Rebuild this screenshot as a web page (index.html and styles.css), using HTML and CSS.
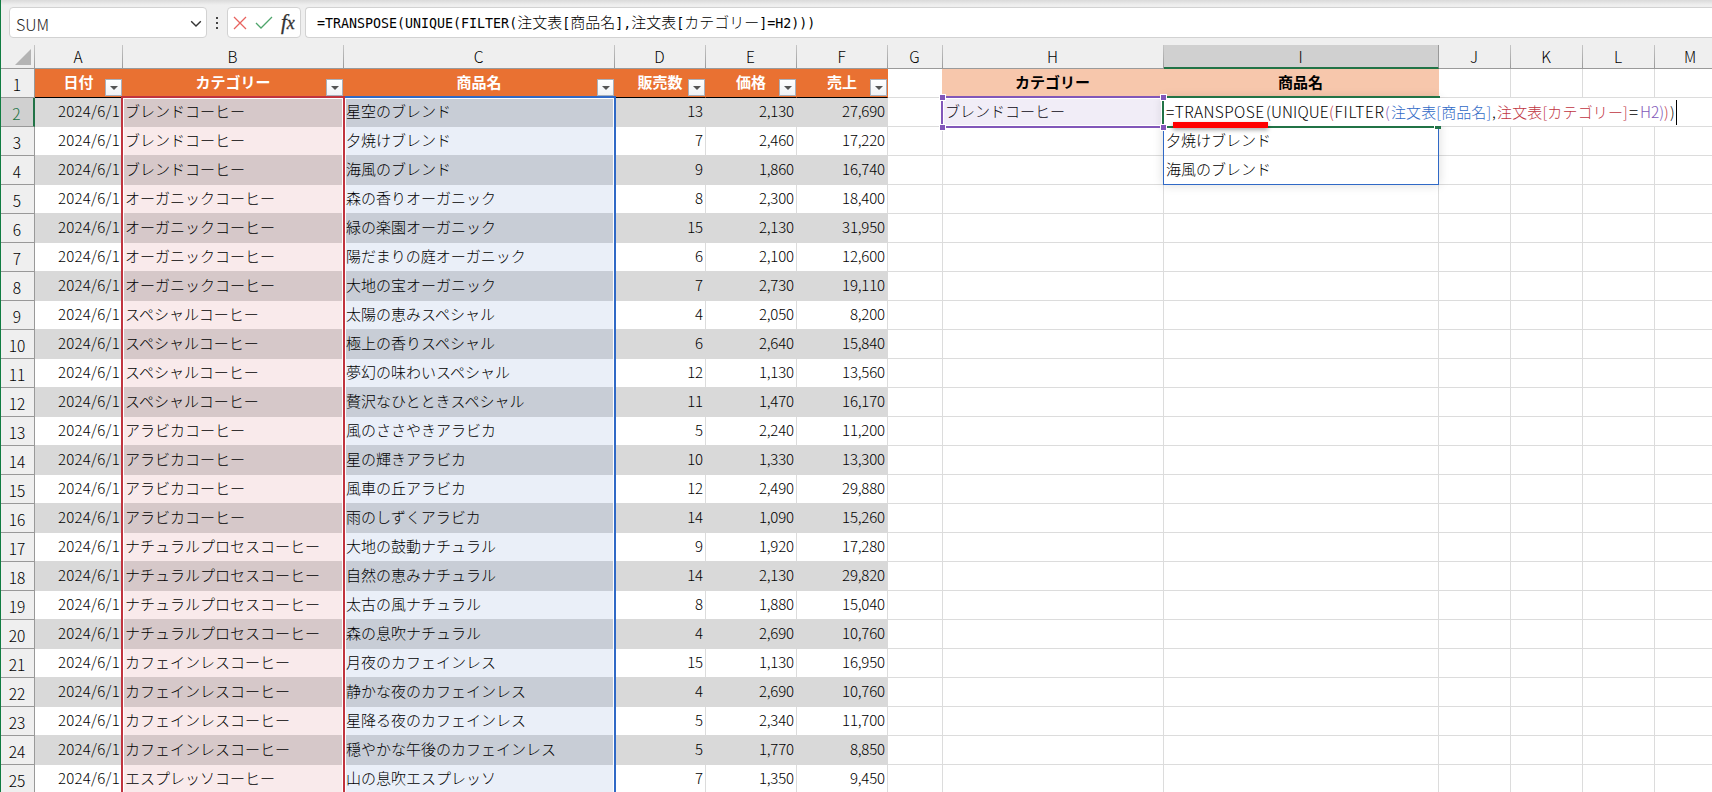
FILE: index.html
```html
<!DOCTYPE html>
<html lang="ja">
<head>
    <meta charset="UTF-8">
    <meta name="viewport" content="width=device-width, initial-scale=1.0">
    <title>注文表</title>
    <link rel="stylesheet" href="styles.css">
</head>
<body>
    <div class="app">
        <div class="formula-bar">
            <div class="name-box">
                <span>SUM</span>
                <svg width="12" height="8" viewBox="0 0 12 8"><path d="M1.2 1.2L6 6l4.8-4.8" fill="none" stroke="#333" stroke-width="1.4"/></svg>
            </div>
            <svg class="dots" width="4" height="14" viewBox="0 0 4 14"><path d="M1 1h2v2H1zM1 6h2v2H1zM1 11h2v2H1z" fill="#444"/></svg>
            <div class="actions">
                <svg width="14" height="14" viewBox="0 0 14 14"><path d="M1 1l12 12M13 1L1 13" fill="none" stroke="#e8635f" stroke-width="1.3"/></svg>
                <svg width="18" height="14" viewBox="0 0 18 14"><path d="M1 7l5 5L17 1" fill="none" stroke="#4ea56b" stroke-width="1.3"/></svg>
                <span class="fx"><i>f</i><i class="x">x</i></span>
            </div>
            <div class="formula-input">=TRANSPOSE(UNIQUE(FILTER(<b>注文表</b>[<b>商品名</b>],<b>注文表</b>[<b>カテゴリー</b>]=H2)))</div>
        </div>

        <div class="sheet">
            <table>
                <colgroup>
                    <col class="w-head"><col class="w-a"><col class="w-b"><col class="w-c">
                    <col class="w-d"><col class="w-d"><col class="w-d"><col class="w-g">
                    <col class="w-b"><col class="w-i"><col class="w-j"><col class="w-j"><col class="w-j"><col class="w-j">
                </colgroup>
                <thead>
                    <tr>
                        <th class="corner"><svg width="16" height="16" viewBox="0 0 16 16"><path d="M16 0v16H0z" fill="#b4b4b4"/></svg></th>
                        <th>A</th><th>B</th><th>C</th><th>D</th><th>E</th><th>F</th><th>G</th>
                        <th>H</th><th class="active">I</th><th>J</th><th>K</th><th>L</th><th>M</th>
                    </tr>
                </thead>
                <tbody id="rows"></tbody>
            </table>

            <div class="range range-b"></div>
            <div class="range range-c"></div>
            <div class="spill"></div>
            <div class="editor">
                <span class="fn1">=TRANSPOSE</span>
                <span class="fn2">(UNIQUE</span>
                <span class="fn3"><em class="red">(</em>FILTER</span>
                <span class="paren purple">(</span>
                <span class="ref1 blue">注文表[商品名]</span>
                <span class="comma">,</span>
                <span class="ref2 red">注文表[カテゴリー]</span>
                <span class="eq">=</span>
                <span class="ref3 purple">H2)</span>
                <span class="paren red">)</span>
                <span class="paren">)</span>
                <span class="caret"></span>
            </div>
            <div class="cell-frame"></div>
            <div class="range-h"><i></i><i></i><i></i><i></i></div>
            <div class="underline"></div>
        </div>
    </div>

    <script>
        const headers = ["日付", "カテゴリー", "商品名", "販売数", "価格", "売上"];
        const orders = [
            ["ブレンドコーヒー", "星空のブレンド", 13, 2130],
            ["ブレンドコーヒー", "夕焼けブレンド", 7, 2460],
            ["ブレンドコーヒー", "海風のブレンド", 9, 1860],
            ["オーガニックコーヒー", "森の香りオーガニック", 8, 2300],
            ["オーガニックコーヒー", "緑の楽園オーガニック", 15, 2130],
            ["オーガニックコーヒー", "陽だまりの庭オーガニック", 6, 2100],
            ["オーガニックコーヒー", "大地の宝オーガニック", 7, 2730],
            ["スペシャルコーヒー", "太陽の恵みスペシャル", 4, 2050],
            ["スペシャルコーヒー", "極上の香りスペシャル", 6, 2640],
            ["スペシャルコーヒー", "夢幻の味わいスペシャル", 12, 1130],
            ["スペシャルコーヒー", "贅沢なひとときスペシャル", 11, 1470],
            ["アラビカコーヒー", "風のささやきアラビカ", 5, 2240],
            ["アラビカコーヒー", "星の輝きアラビカ", 10, 1330],
            ["アラビカコーヒー", "風車の丘アラビカ", 12, 2490],
            ["アラビカコーヒー", "雨のしずくアラビカ", 14, 1090],
            ["ナチュラルプロセスコーヒー", "大地の鼓動ナチュラル", 9, 1920],
            ["ナチュラルプロセスコーヒー", "自然の恵みナチュラル", 14, 2130],
            ["ナチュラルプロセスコーヒー", "太古の風ナチュラル", 8, 1880],
            ["ナチュラルプロセスコーヒー", "森の息吹ナチュラル", 4, 2690],
            ["カフェインレスコーヒー", "月夜のカフェインレス", 15, 1130],
            ["カフェインレスコーヒー", "静かな夜のカフェインレス", 4, 2690],
            ["カフェインレスコーヒー", "星降る夜のカフェインレス", 5, 2340],
            ["カフェインレスコーヒー", "穏やかな午後のカフェインレス", 5, 1770],
            ["エスプレッソコーヒー", "山の息吹エスプレッソ", 7, 1350]
        ];
        const side = {
            2: ["ブレンドコーヒー", ""],
            3: ["", "夕焼けブレンド"],
            4: ["", "海風のブレンド"]
        };
        const filter = '<span class="filter"><svg width="8" height="4" viewBox="0 0 8 4"><path d="M0 0h8L4 4z" fill="#555"/></svg></span>';
        const empty = "<td></td>";

        let html = '<tr class="titles"><th>1</th>';
        headers.forEach(h => html += `<td class="title"><span>${h}</span>${filter}</td>`);
        html += '<td class="gap"></td><td class="title2">カテゴリー</td><td class="title2">商品名</td>' + empty.repeat(4) + "</tr>";

        orders.forEach((o, i) => {
            const n = i + 2;
            const s = side[n] || ["", ""];
            html += `<tr class="${i % 2 ? "plain" : "band"}"><th class="${n === 2 ? "active" : ""}">${n}</th>
                <td class="t num date">2024/6/1</td>
                <td class="t cat">${o[0]}</td>
                <td class="t item">${o[1]}</td>
                <td class="t num">${o[2]}</td>
                <td class="t num">${o[3].toLocaleString("en-US")}</td>
                <td class="t num">${(o[2] * o[3]).toLocaleString("en-US")}</td>
                ${empty}<td>${s[0]}</td><td>${s[1]}</td>${empty.repeat(4)}</tr>`;
        });
        document.getElementById("rows").innerHTML = html;
    </script>
</body>
</html>
```

FILE: styles.css
```css
* {
    box-sizing: border-box;
}

body {
    margin: 0;
    background: #fff;
    color: #000;
    font-family: "Noto Sans CJK JP", sans-serif;
    font-size: 15px;
    font-weight: 300;
    overflow: hidden;
}

.app {
    width: 1712px;
    height: 792px;
    overflow: hidden;
    border-left: 1px solid #107c41;
}

/* formula bar */
.formula-bar {
    display: flex;
    align-items: flex-start;
    height: 45px;
    padding: 7px 0 0 8px;
    background: linear-gradient(#dadada 0, #efefef 5px);
}

.name-box, .actions, .formula-input {
    height: 31px;
    background: #fff;
    border: 1px solid #d2d2d2;
    border-radius: 4px;
}

.name-box {
    display: flex;
    align-items: center;
    justify-content: space-between;
    width: 198px;
    padding: 3px 4px 0 6px;
    font-size: 16px;
    color: #222;
}

.dots {
    margin: 9px 8px 0 8px;
}

.actions {
    display: flex;
    align-items: center;
    width: 74px;
    padding-left: 5px;
}

.actions svg + svg {
    margin-left: 8px;
}

.fx {
    margin-left: 8px;
    font: 21px/24px "Liberation Serif", serif;
    color: #333;
    -webkit-text-stroke: 0.3px #333;
}

.fx .x {
    font-size: 18px;
}

.formula-input {
    flex: 1;
    margin-left: 4px;
    padding-left: 11px;
    border-right: 0;
    border-radius: 4px 0 0 4px;
    font: 13.3px/27px "DejaVu Sans Mono", monospace;
    white-space: nowrap;
}

.formula-input b {
    font: 300 15px/27px "Noto Sans CJK JP", sans-serif;
}

/* grid */
.sheet {
    position: relative;
}

table {
    width: 1726px;
    table-layout: fixed;
    border-collapse: separate;
    border-spacing: 0;
}

.w-head { width: 34px; }
.w-a { width: 88px; }
.w-b { width: 221px; }
.w-c { width: 271px; }
.w-d { width: 91px; }
.w-g { width: 55px; }
.w-i { width: 275px; }
.w-j { width: 72px; }

th, td {
    height: 29px;
    padding: 0 3px 0 2px;
    line-height: 26px;
    border-right: 1px solid #dcdcdc;
    border-bottom: 1px solid #dcdcdc;
    white-space: nowrap;
    overflow: hidden;
    vertical-align: top;
}

th {
    background: #efefef;
    font-weight: 300;
    font-size: 15.5px;
    text-align: center;
}

thead th {
    height: 24px;
    line-height: 22px;
    border-bottom-color: #999;
    border-right: 1px solid;
    border-image: linear-gradient(#c8c8c8, #999) 1;
}

thead th.active {
    background: #d0d0d0;
    border-bottom: 2px solid #217346;
    border-image: none;
    border-right-color: #999;
}

.corner svg {
    display: block;
    margin: 4px 0 0 12px;
}

tbody th {
    padding-top: 2px;
    border-color: #999;
}

tbody th.active {
    background: #d0d0d0;
    color: #217346;
    border-right: 2px solid #217346;
}

.num {
    text-align: right;
    padding-right: 2px;
    letter-spacing: -0.15px;
}

.date {
    letter-spacing: 0.25px;
}

.title {
    position: relative;
    padding: 0 3px;
    background: #e97132;
    border-right-color: #e97132;
    border-bottom-color: #000;
    color: #fff;
    font-weight: 700;
    text-align: center;
}

.filter {
    position: absolute;
    right: 0;
    bottom: 1px;
    display: flex;
    align-items: center;
    justify-content: center;
    width: 17px;
    height: 17px;
    background: linear-gradient(#fff, #f0f2f5);
    border: 1px solid #a9b0bb;
}

.title2 {
    background: #f7c7ac;
    border-color: #f7c7ac;
    font-weight: 700;
    text-align: center;
}

.gap {
    border-right-color: #f7c7ac;
}

.t {
    border-bottom-color: #d9d9d9;
}

.band .t {
    background: #d9d9d9;
    border-right-color: #d9d9d9;
}

.cat, .plain .cat { background: #f9eaeb; border-bottom-color: #d6c8c9; }
.band .cat { background: #d6c8c9; border-color: #d6c8c9; }
.item, .plain .item { background: #eaeff8; border-bottom-color: #c8cdd6; }
.band .item { background: #c8cdd6; border-color: #c8cdd6; }

/* referenced ranges */
.range {
    position: absolute;
    top: 51px;
    height: 720px;
    border: 2px solid;
    border-bottom: 0;
    box-shadow: inset 0 0 0 1px #fff;
}

.range-b {
    left: 120px;
    width: 224px;
    color: #c0343f;
    z-index: 1;
}

.range-c {
    left: 342px;
    width: 273px;
    color: #3069c6;
}

.range-h {
    position: absolute;
    left: 940px;
    top: 51px;
    width: 221px;
    height: 32px;
    border: 2px solid #8257b9;
    border-right: 0;
    box-shadow: inset 0 0 0 1px #fff;
    background: rgba(130, 87, 185, 0.11);
}

.range-h i {
    position: absolute;
    width: 7px;
    height: 7px;
    background: #8257b9;
    border: 1px solid #fff;
}

.range-h i:nth-child(1) { left: -4px; top: -4px; }
.range-h i:nth-child(2) { right: -5px; top: -4px; }
.range-h i:nth-child(3) { left: -4px; bottom: -5px; }
.range-h i:nth-child(4) { right: -5px; bottom: -5px; }

.spill {
    position: absolute;
    left: 1162px;
    top: 53px;
    width: 276px;
    height: 87px;
    border: 1px solid #3069c6;
    box-shadow: 0 0 10px rgba(0, 0, 0, 0.15);
}

.editor {
    position: absolute;
    left: 1163px;
    top: 53px;
    width: 549px;
    height: 28px;
    padding-left: 2px;
    display: flex;
    background: #fff;
    line-height: 27px;
    white-space: nowrap;
}

.editor em {
    font-style: normal;
}

.fn1 { width: 100px; font-size: 15.5px; letter-spacing: 0.4px; }
.fn2 { width: 63px; font-size: 15.5px; letter-spacing: 0.1px; }
.fn3 { width: 56px; font-size: 15.5px; letter-spacing: 0.7px; }
.paren { width: 6px; }
.ref1 { width: 101px; letter-spacing: 0.1px; }
.comma { width: 5px; }
.ref2 { width: 132px; letter-spacing: 0.15px; }
.eq { width: 11px; font-size: 17px; }
.ref3 { width: 24px; font-size: 15.5px; }

.red { color: #c0343f; }
.blue { color: #3069c6; }
.purple { color: #8257b9; }

.caret {
    width: 1px;
    height: 25px;
    margin-top: 2px;
    background: #000;
}

.cell-frame {
    position: absolute;
    left: 1161px;
    top: 51px;
    width: 278px;
    height: 32px;
    border: 2px solid #217346;
    border-right: 0;
}

.cell-frame::after {
    content: "";
    position: absolute;
    right: -1px;
    bottom: -3px;
    width: 6px;
    height: 3px;
    background: #217346;
    border-left: 1px solid #fff;
}

.underline {
    position: absolute;
    left: 1172px;
    top: 77px;
    width: 95px;
    height: 6px;
    background: #f00;
    box-shadow: 0 2px 4px rgba(0, 0, 0, 0.35);
}
```
